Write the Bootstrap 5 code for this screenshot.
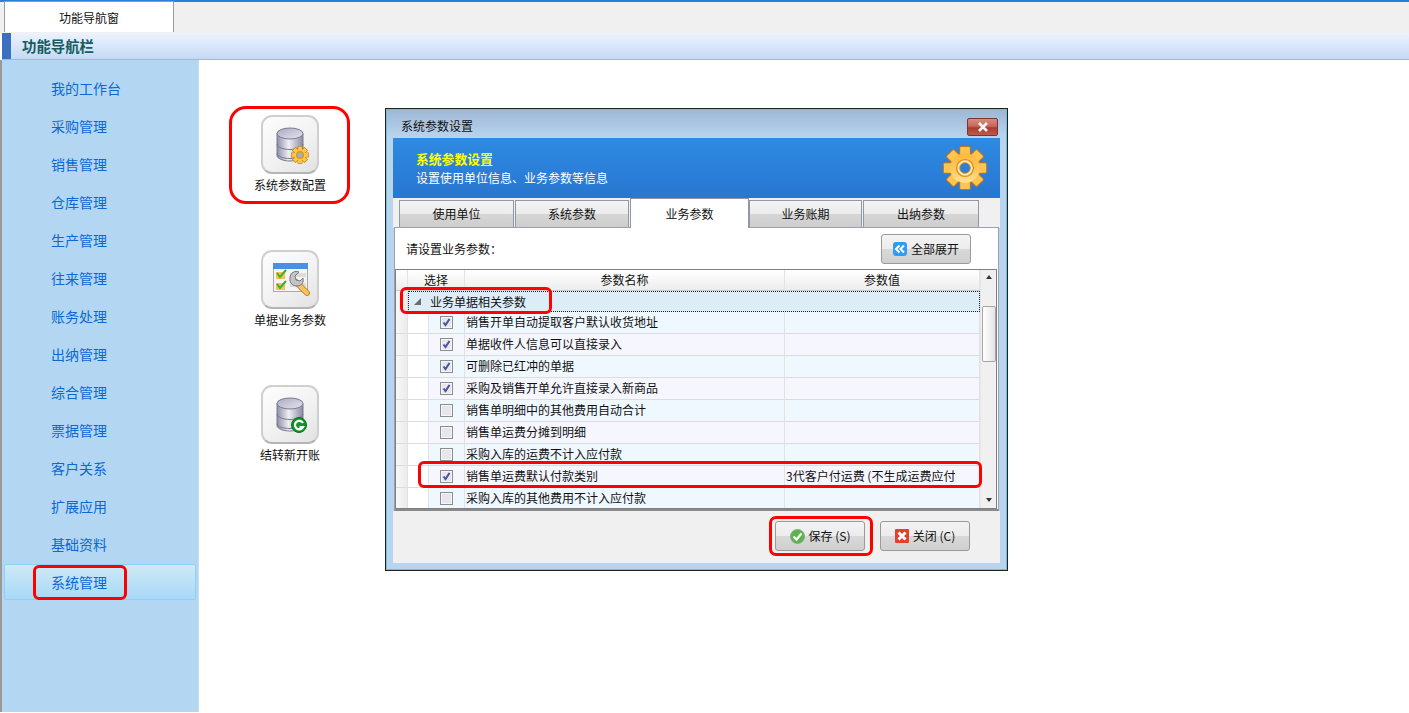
<!DOCTYPE html>
<html lang="zh-CN">
<head>
<meta charset="utf-8">
<title>功能导航窗</title>
<link href="https://cdn.jsdelivr.net/npm/bootstrap@5.3.0/dist/css/bootstrap.min.css" rel="stylesheet">
<style>
html,body{height:713px;overflow:hidden}
body{font-family:"Noto Sans CJK SC","Liberation Sans",sans-serif;font-size:12px;line-height:18px;color:#111;background:#fff;position:relative}
svg{display:block}
.topstrip{height:33px;border-top:2px solid #2a80d6;background:#f0f0f0;padding-left:4px;flex:none}
.toptab{width:170px;height:31px;background:#fff;border:1px solid #9a9a9a;border-bottom:0;margin-top:-1px;line-height:31px;position:relative;z-index:1}
.headbar{height:27px;margin-left:2px;background:linear-gradient(#edf3fe,#c5d9f5);border-bottom:1px solid #aab7c7;flex:none}
.headblock{width:9px;background:#3d6fc0}
.headtext{font-size:14.4px;font-weight:700;color:#155d60;padding-left:11px;line-height:26px}
.shell{flex:1;border-left:2px solid #999;min-height:0;margin-bottom:1px}
.sidebar{width:197px;flex:none;background:#b3d7f2;border-right:1px solid #c3dcf0;padding:9px 2px 0}
.sidebar .nav-link{height:38px;line-height:37px;padding:0 0 0 46px;font-size:14px;color:#0b68d4;border:1px solid transparent;border-radius:2px}
.sidebar .nav-link.active{background:linear-gradient(#cfe9f6,#a8d9f7);border-color:#8fd0f5;height:36px;line-height:35px;margin-top:1px}
.launcher{width:120px;margin-left:31px;padding-top:55px;flex:none}
.launchitem{height:135px;text-align:center}
.launchtile{width:58px;height:59px;border-radius:11px;background:linear-gradient(145deg,#fdfdfd 0,#f2f2f2 55%,#e2e2e2 100%);border:2px solid #cfcfcf;border-bottom-color:#b5b5b5;margin:0 auto 1px;box-sizing:border-box}
.launchtext{line-height:18px;padding-top:1px}
.dialogwin{width:623px;height:463px;margin:48px 0 0 35px;border:1px solid #222;background:#b9d4ee;flex:none;padding:0 7px 7px;box-shadow:inset 0 0 0 1px #6cc0dc}
.wintitle{height:28px;margin:1px -6px 0;padding:0 8px 0 14px;background:linear-gradient(#9db7d5,#bad5ef)}
.closex{width:31px;height:18px;border:1px solid #7c3430;border-radius:2px;background:linear-gradient(#d88b82 0,#c9675c 45%,#a93c30 55%,#c2584a 100%);margin-top:8px}
.titlelabel{line-height:32px}
.bluehead{height:60px;background:linear-gradient(#2e8ae2,#2876d0);color:#fff;padding:11px 12px 0 23px}
.blueline{color:#ff0;font-weight:700;font-size:12.8px;line-height:20px}
.gearplace{margin-top:-4px}
.tabrow{height:30px;background:#f0f0f0;padding-left:6px}
.wintab{height:28px;margin-top:2px;line-height:26px;text-align:center;background:linear-gradient(#f3f3f3 0,#ececec 50%,#d6d6d6 50%,#cdcdcd 100%);border:1px solid #8f98a3;margin-right:1px;position:relative}
.wintab.on{height:30px;margin-top:0;background:#fff;border-bottom:0;margin-right:0;line-height:30px;z-index:1}
.panelbox{height:284px;margin:-1px 1px 0;background:#fff;border:1px solid #9aa2ab;border-bottom:2px solid #8a8a8a;position:relative}
.tools{height:41px;padding:0 27px 0 11px}
.wbtn{width:90px;height:30px;padding:0;font-size:12px;line-height:18px;color:#111;background:linear-gradient(#f3f3f3 0,#ececec 50%,#d9d9d9 50%,#cfcfcf 100%);border:1px solid #9a9a9a;border-radius:3px}
.wbtn:hover{color:#111;border-color:#9a9a9a}
.gridbox{height:240px;margin:0 1px 0 0;border:1px solid #808080;overflow:hidden}
.table.pgrid{width:584px;table-layout:fixed;border-collapse:separate;border-spacing:0;margin:0;--bs-table-bg:transparent;--bs-table-border-color:transparent;color:#111;flex:none}
.table.pgrid>*>*>*{padding:0;height:22px;font-size:12px;line-height:18px;border-bottom:1px solid #dcdcdc;border-right:1px solid #e2e2e2;white-space:nowrap;overflow:hidden;box-shadow:none;color:#111;vertical-align:middle}
.table.pgrid>thead>tr>th{font-weight:400;text-align:center;height:21px;background:linear-gradient(#fff 0,#f7f7f7 50%,#ececec 100%);border-bottom:1px solid #ccc;border-right:1px solid #e4e4e4}
.table.pgrid>tbody>tr>.rowhead{background:linear-gradient(90deg,#f8f8f8,#ebebeb)}
.table.pgrid>tbody>tr>.ind{background:#fff}
.table.pgrid>tbody>tr.oddrow>.fill{background:#f0f8ff}
.table.pgrid>tbody>tr.evenrow>.fill{background:#f6f6ff}
.table.pgrid>tbody>tr>.txt{padding:0 0 2px 1px}
.table.pgrid>tbody>tr>.grouprow{height:21px;background:#dcedf8;border:1px dotted #222;padding:0 0 1px 4px;line-height:17px}
.table.pgrid>tbody>tr>.groupedge{height:21px;border-bottom:0}
.boxcheck{width:13px;height:13px;margin:0 auto 1px;border:1px solid #8d8d8d;background:#e6e6ec;box-shadow:inset 0 0 0 1px #f6f6f6}
.vbar{width:17px;background:#f0f0f0;border-left:1px solid #e6e6e6;flex:none;position:relative}
.vthumb{height:56px;margin:36px 1px 0;border:1px solid #a5a5a5;border-radius:2px;background:linear-gradient(90deg,#fff,#e4e4e4)}
.varrow{height:0;width:0;border-left:3px solid transparent;border-right:3px solid transparent;position:absolute;left:5px}
.varrow.up{top:5px;border-bottom:4px solid #333}
.varrow.down{bottom:6px;border-top:4px solid #333}
.footbar{height:52px;background:#f0f0f0;padding:10px 30px 0 0;gap:15px}
.redmark{position:absolute;border:3px solid #f00;pointer-events:none;z-index:5}
.rm1{left:229px;top:106px;width:121px;height:98px;border-radius:17px}
.rm2{left:33px;top:565px;width:94px;height:35px;border-radius:6px}
.rm3{left:400px;top:287px;width:152px;height:27px;border-radius:6px}
.rm4{left:418px;top:461px;width:564px;height:27px;border-radius:6px}
.rm5{left:769px;top:516px;width:104px;height:40px;border-radius:7px}
</style>
</head>
<body class="d-flex flex-column">
<svg width="0" height="0" class="position-absolute">
<defs>
<linearGradient id="gearfill" x1="0" y1="0" x2="0" y2="1"><stop offset="0" stop-color="#ffb83a"/><stop offset=".55" stop-color="#ffc85a"/><stop offset="1" stop-color="#ffe39a"/></linearGradient>
<linearGradient id="discfill" x1="0" y1="0" x2="1" y2="0"><stop offset="0" stop-color="#8e8ea6"/><stop offset=".45" stop-color="#efeff3"/><stop offset="1" stop-color="#8a8aa4"/></linearGradient>
<linearGradient id="disctop" x1="0" y1="0" x2="1" y2="1"><stop offset="0" stop-color="#a9a9c0"/><stop offset="1" stop-color="#e6e6ee"/></linearGradient>
<symbol id="gearmark" viewBox="-24 -24 48 48">
<g fill="#c4761a" stroke="#c4761a" stroke-width="2">
<rect x="-5" y="-22" width="10" height="44" rx="1"/><rect x="-5" y="-22" width="10" height="44" rx="1" transform="rotate(45)"/><rect x="-5" y="-22" width="10" height="44" rx="1" transform="rotate(90)"/><rect x="-5" y="-22" width="10" height="44" rx="1" transform="rotate(135)"/><circle r="15.5"/>
</g>
<g fill="url(#gearfill)">
<rect x="-5" y="-22" width="10" height="44" rx="1" fill="#ffc54f"/><rect x="-5" y="-22" width="10" height="44" rx="1" fill="#ffc54f" transform="rotate(45)"/><rect x="-5" y="-22" width="10" height="44" rx="1" fill="#ffc54f" transform="rotate(90)"/><rect x="-5" y="-22" width="10" height="44" rx="1" fill="#ffc54f" transform="rotate(135)"/><circle r="15.5"/>
</g>
<circle r="9.5" fill="#e28c1e"/><circle r="8" fill="#ffe9ad"/><circle r="5.5" fill="#2c80d8" stroke="#d07f1c"/>
</symbol>
<symbol id="gearsmall" viewBox="-24 -24 48 48">
<g fill="#c4761a" stroke="#c4761a" stroke-width="3">
<rect x="-5" y="-22" width="10" height="44"/><rect x="-5" y="-22" width="10" height="44" transform="rotate(45)"/><rect x="-5" y="-22" width="10" height="44" transform="rotate(90)"/><rect x="-5" y="-22" width="10" height="44" transform="rotate(135)"/><circle r="15.5"/>
</g>
<g fill="#ffc93f">
<rect x="-5" y="-22" width="10" height="44"/><rect x="-5" y="-22" width="10" height="44" transform="rotate(45)"/><rect x="-5" y="-22" width="10" height="44" transform="rotate(90)"/><rect x="-5" y="-22" width="10" height="44" transform="rotate(135)"/><circle r="15.5"/>
</g>
<circle r="9" fill="#b0a9b8" stroke="#d2951c" stroke-width="3"/>
</symbol>
<symbol id="dbstack" viewBox="0 0 28 34">
<path d="M1 6v22c0 3 6 5.500 13 5.500s13-2.500 13-5.500V6z" fill="url(#discfill)" stroke="#7b7b96"/>
<path d="M1 16.500c0 3 6 5.500 13 5.500s13-2.500 13-5.500M1 26c0 3 6 5 13 5s13-2 13-5" fill="none" stroke="#77778f"/>
<ellipse cx="14" cy="6" rx="13" ry="5.500" fill="url(#disctop)" stroke="#7b7b96"/>
</symbol>
<symbol id="tickmark" viewBox="0 0 11 11"><path d="M2.500 5.500l2 2.500 4-6" fill="none" stroke="#44549c" stroke-width="2"/></symbol>
</defs>
</svg>

<div class="topstrip d-flex flex-column">
<div class="toptab text-center">功能导航窗</div>
</div>
<div class="headbar d-flex"><div class="headblock"></div><div class="headtext">功能导航栏</div></div>

<div class="shell d-flex">
<nav class="sidebar nav flex-column flex-nowrap">
<a class="nav-link" href="#">我的工作台</a>
<a class="nav-link" href="#">采购管理</a>
<a class="nav-link" href="#">销售管理</a>
<a class="nav-link" href="#">仓库管理</a>
<a class="nav-link" href="#">生产管理</a>
<a class="nav-link" href="#">往来管理</a>
<a class="nav-link" href="#">账务处理</a>
<a class="nav-link" href="#">出纳管理</a>
<a class="nav-link" href="#">综合管理</a>
<a class="nav-link" href="#">票据管理</a>
<a class="nav-link" href="#">客户关系</a>
<a class="nav-link" href="#">扩展应用</a>
<a class="nav-link" href="#">基础资料</a>
<a class="nav-link active" href="#">系统管理</a>
</nav>

<div class="launcher">
<div class="launchitem">
<div class="launchtile"><svg width="54" height="55" viewBox="0 0 54 55"><use href="#dbstack" x="13" y="10" width="28" height="35"/><use href="#gearsmall" x="28" y="29" width="18" height="18"/></svg></div>
<div class="launchtext">系统参数配置</div>
</div>
<div class="launchitem">
<div class="launchtile"><svg width="54" height="55" viewBox="0 0 54 55">
<rect x="10.500" y="11.500" width="34" height="28" fill="#f4f4f4" stroke="#a9a9a9"/>
<rect x="10" y="11" width="35" height="6" fill="#4b8fe4"/>
<rect x="27" y="21" width="16" height="4" fill="#dcdcdc"/><rect x="27" y="31" width="16" height="4" fill="#dcdcdc"/>
<rect x="13" y="20" width="9" height="7" fill="#f5c24a"/><rect x="13" y="31" width="9" height="7" fill="#f5c24a"/>
<path d="M14 21l3 4 6-7M14 32l3 4 6-7" fill="none" stroke="#3fae33" stroke-width="2"/>
<path d="M33 30l11 11" stroke="#c8801f" stroke-width="6" stroke-linecap="round"/><path d="M33 30l11 11" stroke="#fbc265" stroke-width="4" stroke-linecap="round"/>
<path d="M36 20l-4 4 1 4 4 1 3-3c1 4-1 8-6 8-4 0-8-3-7-8 0-5 5-8 9-6z" fill="#c4c4c8" stroke="#77777f"/>
</svg></div>
<div class="launchtext">单据业务参数</div>
</div>
<div class="launchitem">
<div class="launchtile"><svg width="54" height="55" viewBox="0 0 54 55"><use href="#dbstack" x="13" y="10" width="28" height="35"/>
<circle cx="36" cy="38" r="7.500" fill="#0f9427" stroke="#0b6f1d"/>
<path d="M40 36a4.300 4.300 0 1 0 0 4.200h-3.500" fill="none" stroke="#fff" stroke-width="2.200"/></svg></div>
<div class="launchtext">结转新开账</div>
</div>
</div>

<section class="dialogwin d-flex flex-column">
<div class="wintitle d-flex justify-content-between">
<span class="titlelabel">系统参数设置</span>
<div class="closex d-flex align-items-center justify-content-center"><svg width="14" height="10" viewBox="0 0 14 10"><path d="M3 1l8 8M11 1l-8 8" stroke="#f4f4f4" stroke-width="2.600"/></svg></div>
</div>
<div class="bluehead d-flex justify-content-between">
<div><div class="blueline">系统参数设置</div><div>设置使用单位信息、业务参数等信息</div></div>
<svg width="46" height="46" class="gearplace"><use href="#gearmark" width="46" height="46"/></svg>
</div>
<div class="tabrow d-flex">
<div class="wintab" style="width:115px">使用单位</div>
<div class="wintab" style="width:114px">系统参数</div>
<div class="wintab on" style="width:119px">业务参数</div>
<div class="wintab" style="width:113px">业务账期</div>
<div class="wintab" style="width:116px">出纳参数</div>
</div>
<div class="panelbox">
<div class="tools d-flex justify-content-between align-items-center">
<span>请设置业务参数：</span>
<button type="button" class="btn wbtn d-flex align-items-center justify-content-center gap-1"><svg width="14" height="14" viewBox="0 0 14 14"><rect width="14" height="14" rx="3" fill="#2f9cf0"/><path d="M6.500 3.500L3 7l3.500 3.500M11 3.500L7.500 7l3.500 3.500" fill="none" stroke="#fff" stroke-width="2"/></svg>全部展开</button>
</div>
<div class="gridbox d-flex">
<table class="table pgrid">
<colgroup><col style="width:12px"><col style="width:21px"><col style="width:36px"><col style="width:320px"><col style="width:195px"></colgroup>
<thead><tr><th></th><th colspan="2">选择</th><th>参数名称</th><th>参数值</th></tr></thead>
<tbody>
<tr><td class="rowhead groupedge"></td><td colspan="4" class="grouprow"><span class="d-flex align-items-center gap-2"><svg width="9" height="9" viewBox="0 0 9 9"><path d="M8 1v7H1z" fill="#6c6c6c"/></svg>业务单据相关参数</span></td></tr>
<tr class="oddrow"><td class="rowhead"></td><td class="ind"></td><td class="fill"><div class="boxcheck"><svg width="11" height="11"><use href="#tickmark"/></svg></div></td><td class="fill txt">销售开单自动提取客户默认收货地址</td><td class="fill"></td></tr>
<tr class="evenrow"><td class="rowhead"></td><td class="ind"></td><td class="fill"><div class="boxcheck"><svg width="11" height="11"><use href="#tickmark"/></svg></div></td><td class="fill txt">单据收件人信息可以直接录入</td><td class="fill"></td></tr>
<tr class="oddrow"><td class="rowhead"></td><td class="ind"></td><td class="fill"><div class="boxcheck"><svg width="11" height="11"><use href="#tickmark"/></svg></div></td><td class="fill txt">可删除已红冲的单据</td><td class="fill"></td></tr>
<tr class="evenrow"><td class="rowhead"></td><td class="ind"></td><td class="fill"><div class="boxcheck"><svg width="11" height="11"><use href="#tickmark"/></svg></div></td><td class="fill txt">采购及销售开单允许直接录入新商品</td><td class="fill"></td></tr>
<tr class="oddrow"><td class="rowhead"></td><td class="ind"></td><td class="fill"><div class="boxcheck"></div></td><td class="fill txt">销售单明细中的其他费用自动合计</td><td class="fill"></td></tr>
<tr class="evenrow"><td class="rowhead"></td><td class="ind"></td><td class="fill"><div class="boxcheck"></div></td><td class="fill txt">销售单运费分摊到明细</td><td class="fill"></td></tr>
<tr class="oddrow"><td class="rowhead"></td><td class="ind"></td><td class="fill"><div class="boxcheck"></div></td><td class="fill txt">采购入库的运费不计入应付款</td><td class="fill"></td></tr>
<tr class="evenrow"><td class="rowhead"></td><td class="ind"></td><td class="fill"><div class="boxcheck"><svg width="11" height="11"><use href="#tickmark"/></svg></div></td><td class="fill txt">销售单运费默认付款类别</td><td class="fill txt">3代客户付运费 (不生成运费应付</td></tr>
<tr class="oddrow"><td class="rowhead"></td><td class="ind"></td><td class="fill"><div class="boxcheck"></div></td><td class="fill txt">采购入库的其他费用不计入应付款</td><td class="fill"></td></tr>
</tbody>
</table>
<div class="vbar"><span class="varrow up"></span><div class="vthumb"></div><span class="varrow down"></span></div>
</div>
</div>
<div class="footbar d-flex justify-content-end">
<button type="button" class="btn wbtn d-flex align-items-center justify-content-center gap-1"><svg width="15" height="15" viewBox="0 0 15 15"><circle cx="7.500" cy="7.500" r="7" fill="#58b548" stroke="#8aa88a"/><path d="M3.500 7.500l3 3 5-6" fill="none" stroke="#fff" stroke-width="2.200"/></svg>保存 (S)</button>
<button type="button" class="btn wbtn d-flex align-items-center justify-content-center gap-1"><svg width="14" height="14" viewBox="0 0 14 14"><rect width="14" height="14" rx="1" fill="#e2402c"/><path d="M3.500 3.500l7 7M10.500 3.500l-7 7" stroke="#fff" stroke-width="3"/></svg>关闭 (C)</button>
</div>
</section>
</div>

<div class="redmark rm1"></div>
<div class="redmark rm2"></div>
<div class="redmark rm3"></div>
<div class="redmark rm4"></div>
<div class="redmark rm5"></div>
</body>
</html>
